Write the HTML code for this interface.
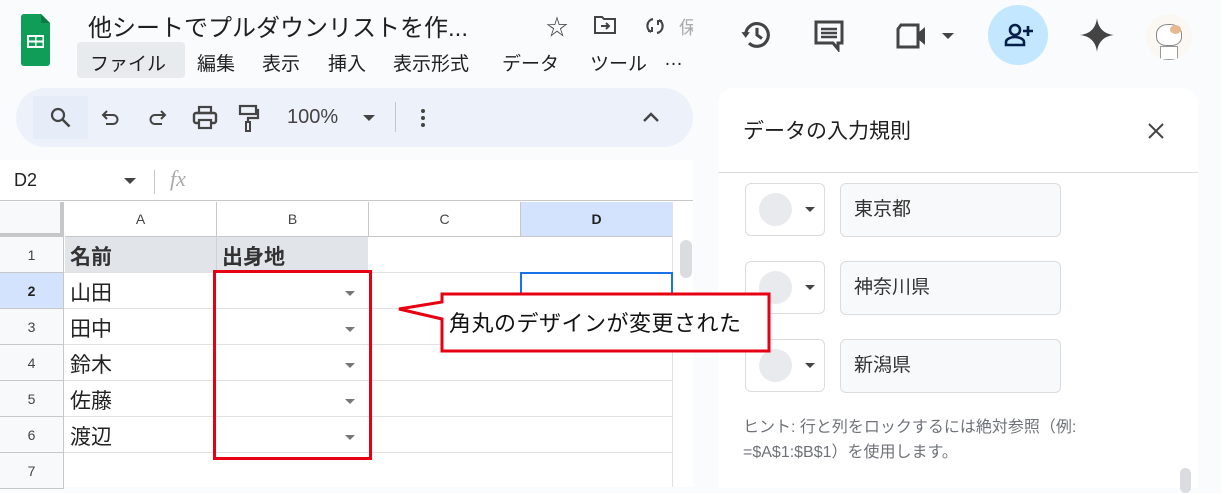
<!DOCTYPE html>
<html><head><meta charset="utf-8"><style>
*{box-sizing:border-box;margin:0;padding:0}
body{width:1221px;height:487px;overflow:hidden;background:#f9fbfd;font-family:"Liberation Sans","Noto Sans CJK JP",sans-serif;position:relative;color:#1f1f1f}
.a{position:absolute}
.menu span{position:absolute;top:49px;font-size:19px;color:#1f1f1f}
.rh{position:absolute;left:0;width:64px;text-align:center;font-size:14px;color:#444;background:#f8f9fa;border-bottom:1px solid #c7c7c7;border-right:1px solid #c7c7c7}
.ch{position:absolute;top:202px;height:35px;font-size:14px;color:#444;text-align:center;line-height:35px;background:#fff;border-right:1px solid #c7c7c7;border-bottom:1px solid #c7c7c7}
.txt{position:absolute;left:70px;font-size:21px;color:#222}
.dd{position:absolute;left:345px;width:0;height:0;border-left:5px solid transparent;border-right:5px solid transparent;border-top:5px solid #777}
.cb{position:absolute;left:745px;width:80px;height:53px;border:1px solid #dadce0;border-radius:6px;background:#fff}
.cb i{position:absolute;left:13px;top:9px;width:33px;height:33px;border-radius:50%;background:#e8eaed}
.cb b{position:absolute;left:59px;top:23px;border-left:5px solid transparent;border-right:5px solid transparent;border-top:5px solid #444}
.tf{position:absolute;left:840px;width:221px;height:54px;border:1px solid #dadce0;border-radius:6px;background:#f8f9fa;font-size:19px;line-height:52px;padding-left:13px;color:#333}
</style></head><body>
<svg class="a" style="left:21px;top:14px" width="29" height="52" viewBox="0 0 29 52"><path d="M3 0h17l9 9v40a3 3 0 0 1-3 3H3a3 3 0 0 1-3-3V3a3 3 0 0 1 3-3z" fill="#0f9d58"/><path d="M20 0l9 9h-9z" fill="#0a7a44"/><rect x="6" y="21" width="17" height="13" fill="#fff"/><rect x="8" y="23" width="6" height="3.5" fill="#0f9d58"/><rect x="15.5" y="23" width="6" height="3.5" fill="#0f9d58"/><rect x="8" y="28.5" width="6" height="3.5" fill="#0f9d58"/><rect x="15.5" y="28.5" width="6" height="3.5" fill="#0f9d58"/></svg>
<div class="a" style="left:88px;top:8px;font-size:24px;color:#1f1f1f;white-space:nowrap">他シートでプルダウンリストを作...</div>
<div class="a" style="left:546px;top:10px;font-size:22px;color:#444">☆</div>
<svg class="a" style="left:593px;top:15px" width="24" height="20" viewBox="0 0 24 20"><path d="M2 2h7l2 2h11v14H2z" fill="none" stroke="#444" stroke-width="2"/><path d="M8 11h8M13 8l3 3-3 3" fill="none" stroke="#444" stroke-width="2"/></svg>
<svg class="a" style="left:645px;top:16px" width="20" height="20" viewBox="0 0 20 20"><path d="M8 3a7 7 0 0 0-2 13M12 17a7 7 0 0 0 2-13" fill="none" stroke="#444" stroke-width="2.2"/><path d="M3 15h4v-4M17 5h-4v4" fill="none" stroke="#444" stroke-width="2"/></svg>
<div class="a" style="left:679px;top:14px;font-size:18px;color:#aaa;width:14px;overflow:hidden">保</div>
<div class="a" style="left:77px;top:42px;width:108px;height:36px;background:#e8ebee;border-radius:4px"></div>
<div class="menu">
<span style="left:90px">ファイル</span><span style="left:197px">編集</span><span style="left:262px">表示</span><span style="left:328px">挿入</span><span style="left:393px">表示形式</span><span style="left:502px">データ</span><span style="left:590px">ツール</span><span style="left:664px">…</span>
</div>
<svg class="a" style="left:740px;top:18px" width="34" height="34" viewBox="0 0 24 24"><path d="M4 12a8 8 0 1 1 2.4 5.7" fill="none" stroke="#444" stroke-width="2.2"/><path d="M1 10l3 4 3-4z" fill="#444"/><path d="M12 7v5l3.5 2.5" fill="none" stroke="#444" stroke-width="2.2"/></svg>
<svg class="a" style="left:814px;top:20px" width="32" height="32" viewBox="0 0 32 32"><path d="M2 2h26v21h-4v6l-5-6H2z" fill="none" stroke="#444" stroke-width="3"/><path d="M7 9h16M7 13h16M7 17h16" stroke="#444" stroke-width="2.4"/></svg>
<svg class="a" style="left:895px;top:22px" width="36" height="28" viewBox="0 0 36 28"><path d="M6 3h17v22H3V7z" fill="none" stroke="#444" stroke-width="3"/><path d="M23 11l7-6v18l-7-6z" fill="#444"/></svg>
<div class="a" style="left:942px;top:33px;border-left:6px solid transparent;border-right:6px solid transparent;border-top:6px solid #444"></div>
<div class="a" style="left:988px;top:5px;width:60px;height:60px;border-radius:50%;background:#c2e7ff"></div>
<svg class="a" style="left:1004px;top:22px" width="30" height="26" viewBox="0 0 30 26"><circle cx="11" cy="8" r="5" fill="none" stroke="#041e49" stroke-width="2.6"/><path d="M2 23v-3c0-3 5-5 9-5s9 2 9 5v3z" fill="none" stroke="#041e49" stroke-width="2.6"/><path d="M24 4v10M19 9h10" stroke="#041e49" stroke-width="2.6"/></svg>
<svg class="a" style="left:1080px;top:18px" width="34" height="34" viewBox="0 0 34 34"><path d="M17 0C18 10 24 16 34 17 24 18 18 24 17 34 16 24 10 18 0 17 10 16 16 10 17 0z" fill="#444"/></svg>
<div class="a" style="left:1146px;top:14px;width:46px;height:46px;border-radius:50%;background:#fbf8f4;overflow:hidden"><div class="a" style="left:10px;top:10px;width:26px;height:22px;border:1px solid #888;border-radius:45% 45% 40% 40%;background:#fff"></div><div class="a" style="left:24px;top:11px;width:11px;height:9px;background:#e8b98e;border-radius:50%"></div><div class="a" style="left:14px;top:32px;width:18px;height:14px;border:1px solid #999;background:#fff"></div></div>
<div class="a" style="left:16px;top:88px;width:677px;height:59px;background:#edf2fa;border-radius:30px"></div>
<div class="a" style="left:33px;top:96px;width:55px;height:43px;background:#e6edf8"></div>
<svg class="a" style="left:49px;top:106px" width="24" height="24" viewBox="0 0 24 24"><circle cx="9" cy="9" r="6" fill="none" stroke="#444" stroke-width="2.2"/><path d="M13.5 13.5l7 7" stroke="#444" stroke-width="2.6"/></svg>
<svg class="a" style="left:101px;top:108px" width="20" height="20" viewBox="0 0 20 20"><path d="M6 3L2 7l4 4" fill="none" stroke="#444" stroke-width="2"/><path d="M2 7h10a4.5 4.5 0 0 1 0 9H5" fill="none" stroke="#444" stroke-width="2"/></svg>
<svg class="a" style="left:147px;top:108px" width="20" height="20" viewBox="0 0 20 20"><path d="M14 3l4 4-4 4" fill="none" stroke="#444" stroke-width="2"/><path d="M18 7H8a4.5 4.5 0 0 0 0 9h7" fill="none" stroke="#444" stroke-width="2"/></svg>
<svg class="a" style="left:192px;top:105px" width="26" height="26" viewBox="0 0 26 26"><rect x="7" y="2" width="12" height="6" fill="none" stroke="#444" stroke-width="2.2"/><rect x="2" y="8" width="22" height="10" rx="2" fill="none" stroke="#444" stroke-width="2.4"/><rect x="7" y="15" width="12" height="8" fill="#edf2fa" stroke="#444" stroke-width="2.2"/></svg>
<svg class="a" style="left:238px;top:104px" width="22" height="28" viewBox="0 0 22 28"><rect x="2" y="2" width="16" height="8" fill="none" stroke="#444" stroke-width="2.2"/><path d="M18 6h2v8h-10v4" fill="none" stroke="#444" stroke-width="2.2"/><rect x="8" y="18" width="4" height="9" fill="none" stroke="#444" stroke-width="2"/></svg>
<div class="a" style="left:287px;top:106px;font-size:20px;color:#444">100%</div>
<div class="a" style="left:363px;top:115px;border-left:6px solid transparent;border-right:6px solid transparent;border-top:6px solid #444"></div>
<div class="a" style="left:395px;top:102px;width:1px;height:30px;background:#c7c7c7"></div>
<div class="a" style="left:421px;top:109px;width:4px;height:4px;border-radius:50%;background:#444;box-shadow:0 7px 0 #444,0 14px 0 #444"></div>
<svg class="a" style="left:642px;top:111px" width="18" height="12" viewBox="0 0 18 12"><path d="M2 10l7-7 7 7" fill="none" stroke="#444" stroke-width="2.4"/></svg>
<div class="a" style="left:0;top:160px;width:693px;height:41px;background:#fff;border-bottom:1px solid #c7c7c7"></div>
<div class="a" style="left:14px;top:170px;font-size:18px;color:#222">D2</div>
<div class="a" style="left:124px;top:178px;border-left:6px solid transparent;border-right:6px solid transparent;border-top:6px solid #444"></div>
<div class="a" style="left:154px;top:170px;width:1px;height:24px;background:#c7c7c7"></div>
<div class="a" style="left:170px;top:166px;font-size:22px;color:#aaa;font-style:italic;font-family:'Liberation Serif',serif">fx</div>
<div class="a" style="left:0;top:201px;width:693px;height:286px;background:#fff"></div>
<div class="a" style="left:0;top:202px;width:64px;height:35px;background:#f8f9fa;border-right:4px solid #c7c7c7;border-bottom:4px solid #c7c7c7"></div>
<div class="ch" style="left:65px;width:152px">A</div>
<div class="ch" style="left:217px;width:152px">B</div>
<div class="ch" style="left:369px;width:152px">C</div>
<div class="ch" style="left:521px;width:152px;background:#d3e3fd;font-weight:bold;color:#222">D</div>
<div class="a" style="left:64px;top:237px;width:609px;height:250px;background-image:linear-gradient(to right,transparent 152px,#e1e1e1 152px,#e1e1e1 153px,transparent 153px),linear-gradient(to bottom,transparent 35px,#e1e1e1 35px,#e1e1e1 36px,transparent 36px);background-size:152px 36px"></div>
<div class="a" style="left:65px;top:237px;width:303px;height:35px;background:#e1e4e8"></div>
<div class="a" style="left:216px;top:237px;width:1px;height:36px;background:#cfd2d6"></div>
<div class="rh" style="top:237px;height:36px;line-height:36px">1</div>
<div class="rh" style="top:273px;height:36px;line-height:36px;background:#d3e3fd;font-weight:bold;color:#222">2</div>
<div class="rh" style="top:309px;height:36px;line-height:36px">3</div>
<div class="rh" style="top:345px;height:36px;line-height:36px">4</div>
<div class="rh" style="top:381px;height:36px;line-height:36px">5</div>
<div class="rh" style="top:417px;height:36px;line-height:36px">6</div>
<div class="rh" style="top:453px;height:36px;line-height:36px">7</div>
<div class="a" style="left:672px;top:202px;width:21px;height:285px;background:#fff;border-left:1px solid #e1e1e1"></div>
<div class="a" style="left:680px;top:240px;width:12px;height:38px;border-radius:6px;background:#dadce0"></div>
<div class="txt" style="top:241px;font-weight:bold;color:#333">名前</div>
<div class="txt" style="left:222px;top:241px;font-weight:bold;color:#333">出身地</div>
<div class="txt" style="top:277px">山田</div>
<div class="txt" style="top:313px">田中</div>
<div class="txt" style="top:349px">鈴木</div>
<div class="txt" style="top:385px">佐藤</div>
<div class="txt" style="top:421px">渡辺</div>
<div class="dd" style="top:291px"></div><div class="dd" style="top:327px"></div><div class="dd" style="top:363px"></div><div class="dd" style="top:399px"></div><div class="dd" style="top:435px"></div>
<div class="a" style="left:520px;top:272px;width:153px;height:30px;border:2px solid #1a73e8;border-bottom:none"></div>
<div class="a" style="left:213px;top:270px;width:159px;height:190px;border:3px solid #e60012"></div>
<!-- panel -->
<div class="a" style="left:718px;top:88px;width:480px;height:400px;background:#fff;border-radius:16px 16px 0 0"></div>
<div class="a" style="left:743px;top:115px;font-size:21px;color:#1f1f1f">データの入力規則</div>
<svg class="a" style="left:1147px;top:122px" width="18" height="18" viewBox="0 0 18 18"><path d="M2 2l14 14M16 2L2 16" stroke="#444" stroke-width="2"/></svg>
<div class="a" style="left:718px;top:172px;width:480px;height:1px;background:#dadce0"></div>
<div class="cb" style="top:183px"><i></i><b></b></div><div class="tf" style="top:183px">東京都</div>
<div class="cb" style="top:261px"><i></i><b></b></div><div class="tf" style="top:261px">神奈川県</div>
<div class="cb" style="top:339px"><i></i><b></b></div><div class="tf" style="top:339px">新潟県</div>
<div class="a" style="left:743px;top:415px;font-size:16px;color:#6f7378;line-height:25px;white-space:nowrap">ヒント: 行と列をロックするには絶対参照（例:<br>=$A$1:$B$1）を使用します。</div>
<div class="a" style="left:1180px;top:468px;width:11px;height:25px;border-radius:6px;background:#dadce0"></div>
<!-- callout -->
<svg class="a" style="left:396px;top:290px" width="380" height="66" viewBox="0 0 380 66"><path d="M46 4H373V61H46V29L3 19 46 12z" fill="#fff" stroke="#e60012" stroke-width="3"/></svg>
<div class="a" style="left:449px;top:306px;font-size:22px;letter-spacing:0.5px;color:#111;white-space:nowrap">角丸のデザインが変更された</div>
</body></html>
